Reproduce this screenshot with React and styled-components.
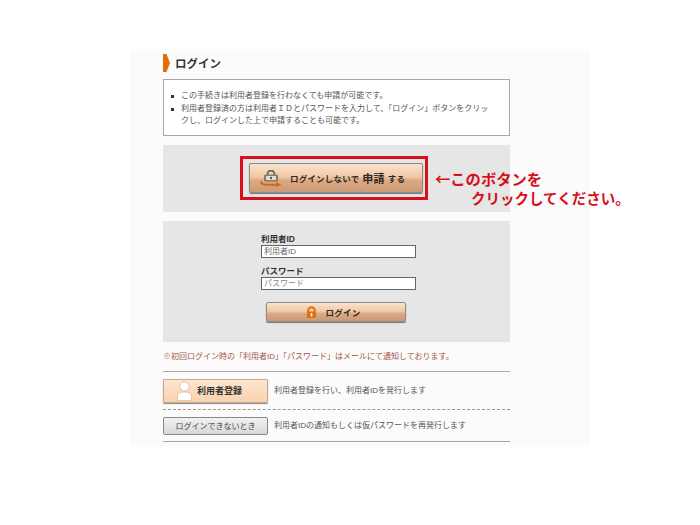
import React from "react";
import styled, { createGlobalStyle } from "styled-components";

const GlobalStyle = createGlobalStyle`
  html, body {
    margin: 0;
    padding: 0;
    background: #fff;
  }
  body {
    font-family: "Liberation Sans", "Noto Sans CJK JP", sans-serif;
    color: #333;
  }
`;

const Page = styled.div`
  width: 700px;
  height: 525px;
  padding-top: 50px;
  box-sizing: border-box;
`;

const Sheet = styled.div`
  width: 460px;
  height: 396px;
  margin-left: 130px;
  padding-left: 33px;
  box-sizing: border-box;
  background: #fbfbfb;
`;

const Column = styled.div`
  width: 347px;
  display: flex;
  flex-direction: column;
  position: relative;
`;

const Title = styled.h1`
  display: flex;
  align-items: center;
  gap: 5px;
  height: 29px;
  padding-bottom: 3px;
  box-sizing: border-box;
  margin: 0;
  font-size: 11.5px;
  font-weight: 700;
  color: #333;
`;

const InfoBox = styled.div`
  height: 57px;
  box-sizing: border-box;
  border: 1px solid #a8a8a8;
  background: #fff;
  padding: 10px 6px 0 6px;
  font-size: 8px;
  line-height: 12.5px;
  color: #555;
`;

const InfoList = styled.ul`
  margin: 0;
  padding: 0 0 0 11px;
  list-style: none;
`;

const InfoItem = styled.li`
  position: relative;
  white-space: pre-line;
  &::before {
    content: "";
    position: absolute;
    left: -10px;
    top: 5px;
    width: 3px;
    height: 3px;
    background: #333;
  }
`;

const Panel = styled.div`
  background: #e6e6e6;
  margin-top: ${(p) => p.$top}px;
  height: ${(p) => p.$height}px;
  box-sizing: border-box;
  display: flex;
  flex-direction: column;
`;

const Highlight = styled.div`
  width: 188px;
  height: 44px;
  margin: 11px 0 0 77px;
  padding-left: 6px;
  box-sizing: border-box;
  border: 3px solid #d8101c;
  display: flex;
  align-items: center;
`;

const OrangeButton = styled.div`
  width: ${(p) => p.$width}px;
  height: ${(p) => p.$height}px;
  box-sizing: border-box;
  border: 1px solid #8a8a8a;
  border-radius: 2px;
  display: flex;
  align-items: center;
  gap: ${(p) => p.$gap}px;
  padding: ${(p) => p.$padding};
  justify-content: ${(p) => p.$justify};
  font-weight: 700;
  color: #2e2a26;
  background: linear-gradient(to bottom, #fae3cf 0%, #f1c8a6 46%, #dcab84 58%, #c99a78 100%);
  box-shadow: 0 1px 1px #777;
`;

const ApplyLabel = styled.span`
  font-size: 8.5px;
  letter-spacing: 0.2px;
  display: flex;
  align-items: center;
`;

const ApplyStrong = styled.span`
  font-size: 11px;
  margin: 0 3px;
`;

const Callout = styled.div`
  position: absolute;
  left: 272px;
  top: 118px;
  width: 200px;
  color: #d8101c;
  font-family: "Noto Sans CJK JP", sans-serif;
  font-size: 15.3px;
  font-weight: 700;
  line-height: 20px;
  white-space: nowrap;
`;

const CalloutIndent = styled.div`
  padding-left: 36px;
  font-size: 14.5px;
`;

const Form = styled.div`
  width: 155px;
  margin: 13px 0 0 98px;
  display: flex;
  flex-direction: column;
`;

const FieldLabel = styled.div`
  font-size: 8.5px;
  font-weight: 700;
  line-height: 11px;
  height: 11px;
  color: #333;
  margin-top: ${(p) => p.$top}px;
`;

const Field = styled.div`
  height: 13px;
  box-sizing: border-box;
  border: 1px solid #666;
  background: #fff;
  padding-left: 2px;
  font-size: 8px;
  line-height: 11px;
  color: ${(p) => p.$color};
`;

const LoginLabel = styled.span`
  font-size: 8.5px;
  letter-spacing: 0.3px;
`;

const LoginRow = styled.div`
  margin-top: 12px;
  margin-left: 5px;
`;

const Note = styled.p`
  margin: 0;
  padding-top: 10px;
  height: 30px;
  box-sizing: border-box;
  font-size: 8px;
  line-height: 10px;
  color: #a5554a;
  border-bottom: 1px solid #a8a8a8;
`;

const ActionRow = styled.div`
  display: flex;
  align-items: center;
  gap: 6px;
  height: ${(p) => p.$height}px;
  box-sizing: border-box;
  border-bottom: 1px ${(p) => p.$line} ${(p) => (p.$line === "dashed" ? "#999" : "#a8a8a8")};
`;

const RegisterButton = styled.div`
  width: 105px;
  height: 24px;
  box-sizing: border-box;
  border: 1px solid #c9a88c;
  border-radius: 1px;
  background: linear-gradient(to bottom, #fde6d0, #f9d2ae);
  box-shadow: 0 1px 1px #888;
  display: flex;
  align-items: center;
  padding-left: 13px;
  gap: 5px;
  font-size: 9px;
  font-weight: 700;
  color: #333;
`;

const GreyButton = styled.div`
  width: 105px;
  height: 18px;
  box-sizing: border-box;
  border: 1px solid #888;
  border-radius: 2px;
  background: linear-gradient(to bottom, #f2f2f2, #d8d8d8);
  display: flex;
  align-items: center;
  justify-content: center;
  font-size: 8px;
  color: #444;
`;

const ActionText = styled.span`
  font-size: 8px;
  color: #555;
  padding-bottom: 2px;
`;

const Marker = () => (
  <svg width="7" height="18" viewBox="0 0 7 18">
    <path d="M0 0H3.500L7 9L3.500 18H0Z" fill="#e46c0a" />
  </svg>
);

const ArrowLock = () => (
  <svg width="22" height="17" viewBox="0 0 22 17">
    <path d="M7.500 5V4a3.500 3.500 0 0 1 7 0v1" fill="none" stroke="#6b655c" strokeWidth="1.800" />
    <rect x="4" y="4.500" width="14" height="7" rx="1.500" fill="#857b6e" />
    <rect x="6" y="6" width="10" height="4" rx="1" fill="#e8e0d6" />
    <circle cx="11" cy="8" r="1.200" fill="#5d564d" />
    <path d="M0.800 11.500c.7 2.500 3 3.300 6 3.300h9" fill="none" stroke="#d9660f" strokeWidth="2" />
    <path d="M16 12l5.500 2.800L16 17Z" fill="#d9660f" />
  </svg>
);

const Lock = () => (
  <svg width="11" height="12" viewBox="0 0 11 12">
    <path d="M2.200 7V4.500a3.300 3.300 0 0 1 6.600 0V7" fill="none" stroke="#e0700f" strokeWidth="2" />
    <rect x="1" y="5.500" width="9" height="6.500" rx="1.200" fill="#e0700f" />
    <rect x="4.700" y="7" width="1.600" height="3.500" fill="#fbe6d2" />
  </svg>
);

const Person = () => (
  <svg width="15" height="20" viewBox="0 0 15 20">
    <circle cx="7.500" cy="5.500" r="4.600" fill="#fff" stroke="#e8b78d" strokeWidth="0.800" />
    <path d="M.5 19.500v-4C.5 12.500 3 11 7.500 11s7 1.500 7 4.500v4Z" fill="#fff" stroke="#e8b78d" strokeWidth="0.800" />
  </svg>
);

export default function App() {
  return (
    <>
      <GlobalStyle />
      <Page>
        <Sheet>
          <Column>
            <Title>
              <Marker />
              ログイン
            </Title>
            <InfoBox>
              <InfoList>
                <InfoItem>この手続きは利用者登録を行わなくても申請が可能です。</InfoItem>
                <InfoItem>
                  {"利用者登録済の方は利用者ＩＤとパスワードを入力して、「ログイン」ボタンをクリッ\nクし、ログインした上で申請することも可能です。"}
                </InfoItem>
              </InfoList>
            </InfoBox>
            <Panel $top={9} $height={67}>
              <Highlight>
                <OrangeButton $width={174} $height={30} $gap={8} $padding="0 0 0 10px" $justify="flex-start">
                  <ArrowLock />
                  <ApplyLabel>
                    ログインしないで<ApplyStrong>申請</ApplyStrong>する
                  </ApplyLabel>
                </OrangeButton>
              </Highlight>
            </Panel>
            <Callout>
              ←このボタンを
              <CalloutIndent>クリックしてください。</CalloutIndent>
            </Callout>
            <Panel $top={9} $height={121}>
              <Form>
                <FieldLabel $top={0}>利用者ID</FieldLabel>
                <Field $color="#666">利用者ID</Field>
                <FieldLabel $top={8}>パスワード</FieldLabel>
                <Field $color="#888">パスワード</Field>
                <LoginRow>
                  <OrangeButton $width={140} $height={20} $gap={8} $padding="0 5px 0 0" $justify="center">
                    <Lock />
                    <LoginLabel>ログイン</LoginLabel>
                  </OrangeButton>
                </LoginRow>
              </Form>
            </Panel>
            <Note>※初回ログイン時の「利用者ID」「パスワード」はメールにて通知しております。</Note>
            <ActionRow $height={38} $line="dashed">
              <RegisterButton>
                <Person />
                利用者登録
              </RegisterButton>
              <ActionText>利用者登録を行い、利用者IDを発行します</ActionText>
            </ActionRow>
            <ActionRow $height={32} $line="solid">
              <GreyButton>ログインできないとき</GreyButton>
              <ActionText>利用者IDの通知もしくは仮パスワードを再発行します</ActionText>
            </ActionRow>
          </Column>
        </Sheet>
      </Page>
    </>
  );
}
